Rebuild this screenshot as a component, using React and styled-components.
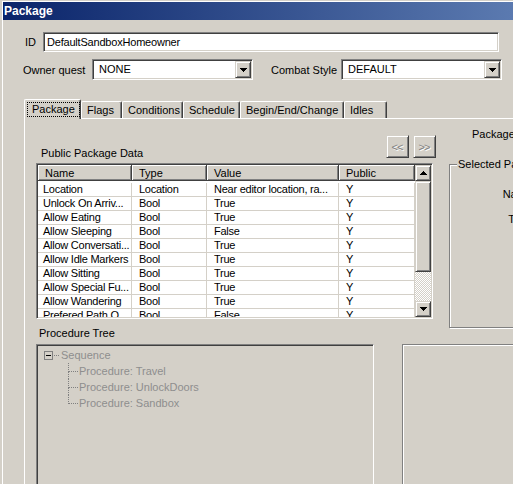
import React from 'react'
import styled, { createGlobalStyle, css } from 'styled-components'

const face = '#D4D0C8'
const grid = '#D4D0C8'

const GlobalStyle = createGlobalStyle`
  html, body {
    margin: 0;
    padding: 0;
    background: ${face};
    overflow: hidden;
  }
  body {
    font-family: "Liberation Sans", Arial, sans-serif;
    font-size: 11px;
    color: #000;
  }
`

// classic 3d edges
const sunken = css`
  box-sizing: border-box;
  border: 1px solid;
  border-color: #808080 #fff #fff #808080;
  box-shadow: inset 1px 1px 0 #404040, inset -1px -1px 0 ${face};
`
const raised = css`
  box-sizing: border-box;
  border: 1px solid;
  border-color: ${face} #404040 #404040 ${face};
  box-shadow: inset 1px 1px 0 #fff, inset -1px -1px 0 #808080;
  background: ${face};
`

const Window = styled.div`
  width: 513px;
  height: 484px;
  box-sizing: border-box;
  overflow: hidden;
  background: ${face};
  border-left: 2px solid ${face};
  border-top: 1px solid ${face};
  box-shadow: inset 1px 1px 0 #fff;
  display: flex;
  flex-direction: column;
`

const TitleBar = styled.div`
  flex-shrink: 0;
  margin: 1px 0 0 1px;
  height: 18px;
  padding-left: 1px;
  background: linear-gradient(to right, #0a246a, #5b7ab0);
  color: #fff;
  font-weight: bold;
  font-size: 12px;
  line-height: 18px;
`

const Body = styled.div`
  display: flex;
  flex-direction: column;
  padding: 12px 0 0 21px;
`

const FieldRow = styled.div`
  display: flex;
  align-items: center;
  margin-top: ${p => p.$top || 0}px;
`

const Label = styled.span`
  box-sizing: border-box;
  width: ${p => p.$w}px;
  padding-left: ${p => p.$pad || 0}px;
  flex-shrink: 0;
  white-space: nowrap;
`

const TextBox = styled.div`
  ${sunken};
  width: ${p => p.$w}px;
  height: 20px;
  background: #fff;
  padding-left: 3px;
  line-height: 18px;
  letter-spacing: -0.2px;
`

const Combo = styled.div`
  ${sunken};
  width: ${p => p.$w}px;
  height: 21px;
  background: #fff;
  display: flex;
  padding: 1px;
`

const ComboText = styled.span`
  flex: 1;
  padding-left: 5px;
  line-height: 17px;
`

const DropButton = styled.div`
  ${raised};
  width: 16px;
  height: 17px;
  display: flex;
  align-items: center;
  justify-content: center;
`

const Arrow = ({ up }) => (
  <svg width="7" height="4" viewBox="0 0 7 4" shapeRendering="crispEdges"
    style={up ? { transform: 'rotate(180deg)' } : undefined}>
    <path d="M0 0h7v1h-1v1h-1v1h-1v1h-1v-1h-1v-1h-1v-1h-1z" fill="#000" />
  </svg>
)

const TabStrip = styled.div`
  display: flex;
  align-items: flex-end;
  height: 19px;
  margin: 19px 0 0 1px;
`

const Tab = styled.div`
  box-sizing: border-box;
  flex-shrink: 0;
  width: ${p => p.$w}px;
  height: ${p => (p.$active ? 20 : 17)}px;
  margin-bottom: ${p => (p.$active ? -1 : 0)}px;
  border-top: 1px solid #fff;
  border-left: 1px solid #fff;
  border-right: 1px solid #404040;
  border-radius: 2px 2px 0 0;
  box-shadow: inset -1px 0 0 #808080;
  background: ${face};
  padding: ${p => (p.$active ? '2px 0 0 2px' : '1px 0 0 5px')};
  line-height: 14px;
  white-space: nowrap;
  position: ${p => (p.$active ? 'relative' : 'static')};
  z-index: ${p => (p.$active ? 1 : 'auto')};
`

const FocusText = styled.span`
  display: inline-block;
  border: 1px dotted #000;
  padding: 0 4px 1px 4px;
  line-height: 12px;
`

const TabPanel = styled.div`
  width: 560px;
  height: 400px;
  box-sizing: border-box;
  flex-shrink: 0;
  margin-left: 1px;
  border-top: 1px solid #fff;
  border-left: 1px solid #fff;
  padding: 8px 0 0 11px;
`

const TopSection = styled.div`
  display: flex;
  align-items: flex-start;
  gap: 16px;
`

const LeftCol = styled.div`
  width: 397px;
  flex-shrink: 0;
  margin-top: 8px;
`

const ListToolbar = styled.div`
  display: flex;
  align-items: flex-start;
  height: 23px;
  gap: 4px;
  margin-right: -3px;
`

const SectionLabel = styled.div`
  flex: ${p => (p.$grow ? 1 : 'none')};
  margin-top: ${p => p.$top || 0}px;
  padding-left: ${p => p.$pad || 0}px;
  line-height: 14px;
  white-space: nowrap;
`

const NavButton = styled.div`
  ${raised};
  width: 23px;
  height: 23px;
  display: flex;
  align-items: center;
  justify-content: center;
  color: #808080;
  text-shadow: 1px 1px 0 #fff;
  letter-spacing: -1px;
  padding-right: 1px;
`

const ListView = styled.div`
  ${sunken};
  margin-top: 5px;
  height: 156px;
  background: #fff;
  display: flex;
  padding: 1px;
  overflow: hidden;
`

const ListArea = styled.div`
  flex: 1;
  overflow: hidden;
`

const HeaderRow = styled.div`
  display: flex;
  height: 16px;
  background: ${face};
`

const HeaderCell = styled.div`
  box-sizing: border-box;
  flex-shrink: 0;
  width: ${p => p.$w}px;
  height: 16px;
  padding: 1px 0 0 7px;
  line-height: 14px;
  border-right: 1px solid #404040;
  border-bottom: 1px solid #404040;
  box-shadow: inset 1px 1px 0 #fff, inset -1px -1px 0 #808080;
`

const Rows = styled.div`
  padding-top: 2px;
`

const Row = styled.div`
  display: flex;
  height: 14px;
  box-sizing: border-box;
  border-bottom: 1px solid ${grid};
  line-height: 13px;
`

const Cell = styled.div`
  box-sizing: border-box;
  flex-shrink: 0;
  width: ${p => p.$w}px;
  padding-left: ${p => p.$pad}px;
  border-right: 1px solid ${grid};
  white-space: nowrap;
  letter-spacing: -0.25px;
`

const ScrollBar = styled.div`
  width: 16px;
  flex-shrink: 0;
  display: flex;
  flex-direction: column;
`

const ScrollButton = styled.div`
  ${raised};
  height: 16px;
  display: flex;
  align-items: center;
  justify-content: center;
`

const Thumb = styled.div`
  ${raised};
  height: 91px;
`

const Track = styled.div`
  flex: 1;
  background-image: conic-gradient(#fff 25%, ${face} 0 50%, #fff 0 75%, ${face} 0);
  background-size: 2px 2px;
`

const RightCol = styled.div`
  width: 200px;
  flex-shrink: 0;
`

const GroupBox = styled.fieldset`
  box-sizing: border-box;
  margin: 16px 0 0 0;
  padding: 0;
  width: 200px;
  height: 171px;
  border: 1px solid #808080;
  box-shadow: inset 1px 1px 0 #fff, 1px 1px 0 #fff;
`

const GroupTitle = styled.legend`
  margin-left: 7px;
  padding: 0 1px;
  line-height: 14px;
  background: ${face};
`

const InfoGrid = styled.div`
  display: grid;
  grid-template-columns: 82px;
  row-gap: 11px;
  margin-top: 16px;
  line-height: 14px;
  text-align: right;
`

const BottomRow = styled.div`
  display: flex;
  gap: 28px;
  margin-top: 4px;
  height: 200px;
`

const TreeBox = styled.div`
  ${sunken};
  width: 338px;
  flex-shrink: 0;
  background: ${face};
  padding: 2px 0 0 2px;
  color: #8e8e8e;
`

const TreeRoot = styled.div`
  display: flex;
  align-items: center;
  height: 16px;
  padding-left: 5px;
`

const Connector = styled.span`
  width: 5px;
  margin: 0 2px 0 1px;
  border-top: 1px dotted #808080;
`

const TreeChildren = styled.div`
  margin-left: 29px;
`

const TreeChild = styled.div`
  position: relative;
  height: 16px;
  line-height: 16px;
  padding-left: 11px;

  &::before {
    content: '';
    position: absolute;
    left: 0;
    top: 0;
    width: 9px;
    height: 8px;
    border-left: 1px dotted #808080;
    border-bottom: 1px dotted #808080;
  }
  &:not(:last-child)::after {
    content: '';
    position: absolute;
    left: 0;
    top: 9px;
    bottom: 0;
    border-left: 1px dotted #808080;
  }
`

const SideBox = styled.div`
  flex: 1;
  border-top: 1px solid #808080;
  border-left: 1px solid #808080;
  box-shadow: inset 1px 1px 0 #fff;
`

const Expander = () => (
  <svg width="9" height="9" viewBox="0 0 9 9" shapeRendering="crispEdges">
    <rect x="0.5" y="0.5" width="8" height="8" fill="none" stroke="#808080" />
    <path d="M2 4h5v1h-5z" fill="#000" />
  </svg>
)

const columns = [
  { title: 'Name', w: 94, pad: 5 },
  { title: 'Type', w: 75, pad: 7 },
  { title: 'Value', w: 132, pad: 7 },
  { title: 'Public', w: 76, pad: 7 },
]

const rows = [
  ['Location', 'Location', 'Near editor location, ra...', 'Y'],
  ['Unlock On Arriv...', 'Bool', 'True', 'Y'],
  ['Allow Eating', 'Bool', 'True', 'Y'],
  ['Allow Sleeping', 'Bool', 'False', 'Y'],
  ['Allow Conversati...', 'Bool', 'True', 'Y'],
  ['Allow Idle Markers', 'Bool', 'True', 'Y'],
  ['Allow Sitting', 'Bool', 'True', 'Y'],
  ['Allow Special Fu...', 'Bool', 'True', 'Y'],
  ['Allow Wandering', 'Bool', 'True', 'Y'],
  ['Prefered Path O...', 'Bool', 'False', 'Y'],
]

const tabs = [
  { label: 'Package', w: 57, active: true },
  { label: 'Flags', w: 41 },
  { label: 'Conditions', w: 61 },
  { label: 'Schedule', w: 57 },
  { label: 'Begin/End/Change', w: 104 },
  { label: 'Idles', w: 43 },
]

const procedures = ['Procedure: Travel', 'Procedure: UnlockDoors', 'Procedure: Sandbox']

export default function App() {
  return (
    <>
      <GlobalStyle />
      <Window>
        <TitleBar>Package</TitleBar>
        <Body>
          <FieldRow>
            <Label $w={20} $pad={2}>ID</Label>
            <TextBox $w={456}>DefaultSandboxHomeowner</TextBox>
          </FieldRow>
          <FieldRow $top={7}>
            <Label $w={69}>Owner quest</Label>
            <Combo $w={161}>
              <ComboText>NONE</ComboText>
              <DropButton><Arrow /></DropButton>
            </Combo>
            <Label $w={88} $pad={18}>Combat Style</Label>
            <Combo $w={161}>
              <ComboText>DEFAULT</ComboText>
              <DropButton><Arrow /></DropButton>
            </Combo>
          </FieldRow>

          <TabStrip>
            {tabs.map(t => (
              <Tab key={t.label} $w={t.w} $active={t.active}>
                {t.active ? <FocusText>{t.label}</FocusText> : t.label}
              </Tab>
            ))}
          </TabStrip>

          <TabPanel>
            <TopSection>
              <LeftCol>
                <ListToolbar>
                  <SectionLabel $grow $top={11} $pad={5}>Public Package Data</SectionLabel>
                  <NavButton>&lt;&lt;</NavButton>
                  <NavButton>&gt;&gt;</NavButton>
                </ListToolbar>
                <ListView>
                  <ListArea>
                    <HeaderRow>
                      {columns.map(c => (
                        <HeaderCell key={c.title} $w={c.w}>{c.title}</HeaderCell>
                      ))}
                    </HeaderRow>
                    <Rows>
                      {rows.map((r, i) => (
                        <Row key={i}>
                          {r.map((v, j) => (
                            <Cell key={j} $w={columns[j].w} $pad={columns[j].pad}>{v}</Cell>
                          ))}
                        </Row>
                      ))}
                    </Rows>
                  </ListArea>
                  <ScrollBar>
                    <ScrollButton><Arrow up /></ScrollButton>
                    <Thumb />
                    <Track />
                    <ScrollButton><Arrow /></ScrollButton>
                  </ScrollBar>
                </ListView>
                <SectionLabel $top={7} $pad={3}>Procedure Tree</SectionLabel>
              </LeftCol>

              <RightCol>
                <SectionLabel $pad={23}>Package</SectionLabel>
                <GroupBox>
                  <GroupTitle>Selected Package Data</GroupTitle>
                  <InfoGrid>
                    <span>Name</span>
                    <span>Type</span>
                  </InfoGrid>
                </GroupBox>
              </RightCol>
            </TopSection>

            <BottomRow>
              <TreeBox>
                <TreeRoot>
                  <Expander />
                  <Connector />
                  <span>Sequence</span>
                </TreeRoot>
                <TreeChildren>
                  {procedures.map(p => (
                    <TreeChild key={p}>{p}</TreeChild>
                  ))}
                </TreeChildren>
              </TreeBox>
              <SideBox />
            </BottomRow>
          </TabPanel>
        </Body>
      </Window>
    </>
  )
}
